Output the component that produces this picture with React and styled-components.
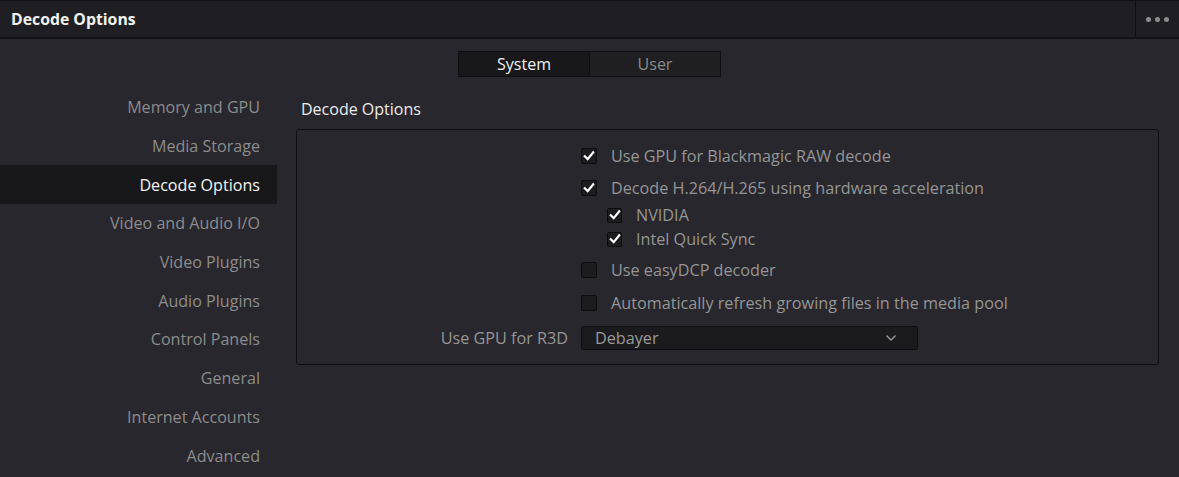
import React from 'react';
import styled, { createGlobalStyle } from 'styled-components';

const GlobalStyle = createGlobalStyle`
    html, body {
        margin: 0;
        padding: 0;
        background: #28272d;
    }
    body {
        font-family: "Open Sans", "Noto Sans", sans-serif;
        -webkit-font-smoothing: antialiased;
    }
`

const sideItems = [
    'Memory and GPU',
    'Media Storage',
    'Decode Options',
    'Video and Audio I/O',
    'Video Plugins',
    'Audio Plugins',
    'Control Panels',
    'General',
    'Internet Accounts',
    'Advanced',
]

function Check({ checked, small }) {
    return (
        <Box $small={small}>
            {checked && (
                <svg width="12" height="12" viewBox="0 0 12 12">
                    <path d="M1.8 6.3 L4.7 9.2 L10.2 2.4" fill="none" stroke="#fff" strokeWidth="2.2" strokeLinecap="square" />
                </svg>
            )}
        </Box>
    )
}

export default function App() {
    return (
        <Wrapper>
            <GlobalStyle />
            <Header>
                <Title>Decode Options</Title>
                <MoreBtn>
                    <Dot /><Dot /><Dot />
                </MoreBtn>
            </Header>
            <Tabs>
                <Tab $active>System</Tab>
                <Tab>User</Tab>
            </Tabs>
            <Body>
                <Sidebar>
                    {sideItems.map((item, i) => (
                        <SideItem key={i} $active={item === 'Decode Options'}>{item}</SideItem>
                    ))}
                </Sidebar>
                <Content>
                    <SectionTitle>Decode Options</SectionTitle>
                    <Panel>
                        <Row $h={32} $mt={10}>
                            <Check checked />
                            <Label>Use GPU for Blackmagic RAW decode</Label>
                        </Row>
                        <Row $h={32}>
                            <Check checked />
                            <Label>Decode H.264/H.265 using hardware acceleration</Label>
                        </Row>
                        <Row $h={24} $indent={26} $mt={-1}>
                            <Check checked small />
                            <Label>NVIDIA</Label>
                        </Row>
                        <Row $h={24} $indent={26}>
                            <Check checked small />
                            <Label>Intel Quick Sync</Label>
                        </Row>
                        <Row $h={32} $mt={3}>
                            <Check />
                            <Label>Use easyDCP decoder</Label>
                        </Row>
                        <Row $h={32} $mt={1}>
                            <Check />
                            <Label>Automatically refresh growing files in the media pool</Label>
                        </Row>
                        <SelectRow>
                            <SelectLabel>Use GPU for R3D</SelectLabel>
                            <Select>
                                <span>Debayer</span>
                                <svg width="12" height="8" viewBox="0 0 12 8">
                                    <path d="M1.5 1.5 L6 6 L10.5 1.5" fill="none" stroke="#9a9a9a" strokeWidth="1.4" />
                                </svg>
                            </Select>
                        </SelectRow>
                    </Panel>
                </Content>
            </Body>
        </Wrapper>
    )
}

const Wrapper = styled.div`
    width: 1179px;
    height: 477px;
    overflow: hidden;
    background: #28272d;
    border-top: 1px solid #111113;
    box-sizing: border-box;
`

const Header = styled.div`
    height: 36px;
    background: #1f1f23;
    border-bottom: 2px solid #141416;
    display: flex;
    align-items: center;
    justify-content: space-between;
`

const Title = styled.div`
    padding-left: 11px;
    font-size: 15.8px;
    font-weight: 700;
    color: #f2f2f2;
`

const MoreBtn = styled.div`
    width: 43px;
    height: 100%;
    border-left: 1px solid #0e0e10;
    display: flex;
    align-items: center;
    justify-content: center;
    gap: 4px;
`

const Dot = styled.span`
    width: 5px;
    height: 5px;
    border-radius: 50%;
    background: #8c8c8c;
`

const Tabs = styled.div`
    margin: 12px auto 0 auto;
    width: 263px;
    height: 26px;
    display: flex;
    border: 1px solid #0f0f11;
    box-sizing: border-box;
`

const Tab = styled.div`
    flex: 1;
    display: flex;
    align-items: center;
    justify-content: center;
    font-size: 16px;
    color: ${({ $active }) => $active ? '#f0f0f0' : '#8a8a8a'};
    background: ${({ $active }) => $active ? '#18181a' : '#1f1f22'};
    & + & {
        border-left: 1px solid #0f0f11;
    }
`

const Body = styled.div`
    display: flex;
    margin-top: 10px;
`

const Sidebar = styled.div`
    width: 277px;
    flex-shrink: 0;
    padding-top: 1px;
`

const SideItem = styled.div`
    height: 38.7px;
    display: flex;
    align-items: center;
    justify-content: flex-end;
    padding-right: 17px;
    font-size: 16.1px;
    color: ${({ $active }) => $active ? '#f4f4f4' : '#8c8c8c'};
    background: ${({ $active }) => $active ? '#18181b' : 'transparent'};
`

const Content = styled.div`
    margin-left: 19px;
    width: 863px;
`

const SectionTitle = styled.div`
    height: 42px;
    box-sizing: border-box;
    padding: 2px 0 0 5px;
    display: flex;
    align-items: center;
    font-size: 16px;
    color: #ececec;
`

const Panel = styled.div`
    border: 1px solid #0e0e10;
    border-radius: 3px;
    height: 236px;
    box-sizing: border-box;
    display: flex;
    flex-direction: column;
`

const Row = styled.div`
    height: ${({ $h }) => $h}px;
    margin-top: ${({ $mt }) => $mt || 0}px;
    display: flex;
    align-items: center;
    gap: 14px;
    padding-left: ${({ $indent }) => 284 + ($indent || 0)}px;
`

const Box = styled.span`
    width: ${({ $small }) => $small ? 15 : 16}px;
    height: ${({ $small }) => $small ? 15 : 16}px;
    box-sizing: border-box;
    border: 1px solid #0c0c0d;
    border-radius: 2px;
    background: #1c1c1e;
    display: flex;
    align-items: center;
    justify-content: center;
    flex-shrink: 0;
`

const Label = styled.span`
    font-size: 16.2px;
    color: #959595;
`

const SelectRow = styled.div`
    margin-top: 7px;
    height: 24px;
    display: flex;
    align-items: center;
`

const SelectLabel = styled.span`
    width: 271px;
    margin-right: 13px;
    text-align: right;
    font-size: 16.2px;
    color: #959595;
`

const Select = styled.div`
    width: 337px;
    height: 24px;
    box-sizing: border-box;
    background: #1b1b1d;
    border: 1px solid #0e0e10;
    border-radius: 2px;
    display: flex;
    align-items: center;
    justify-content: space-between;
    padding: 0 20px 0 13px;
    font-size: 16.2px;
    color: #9a9a9a;
`
